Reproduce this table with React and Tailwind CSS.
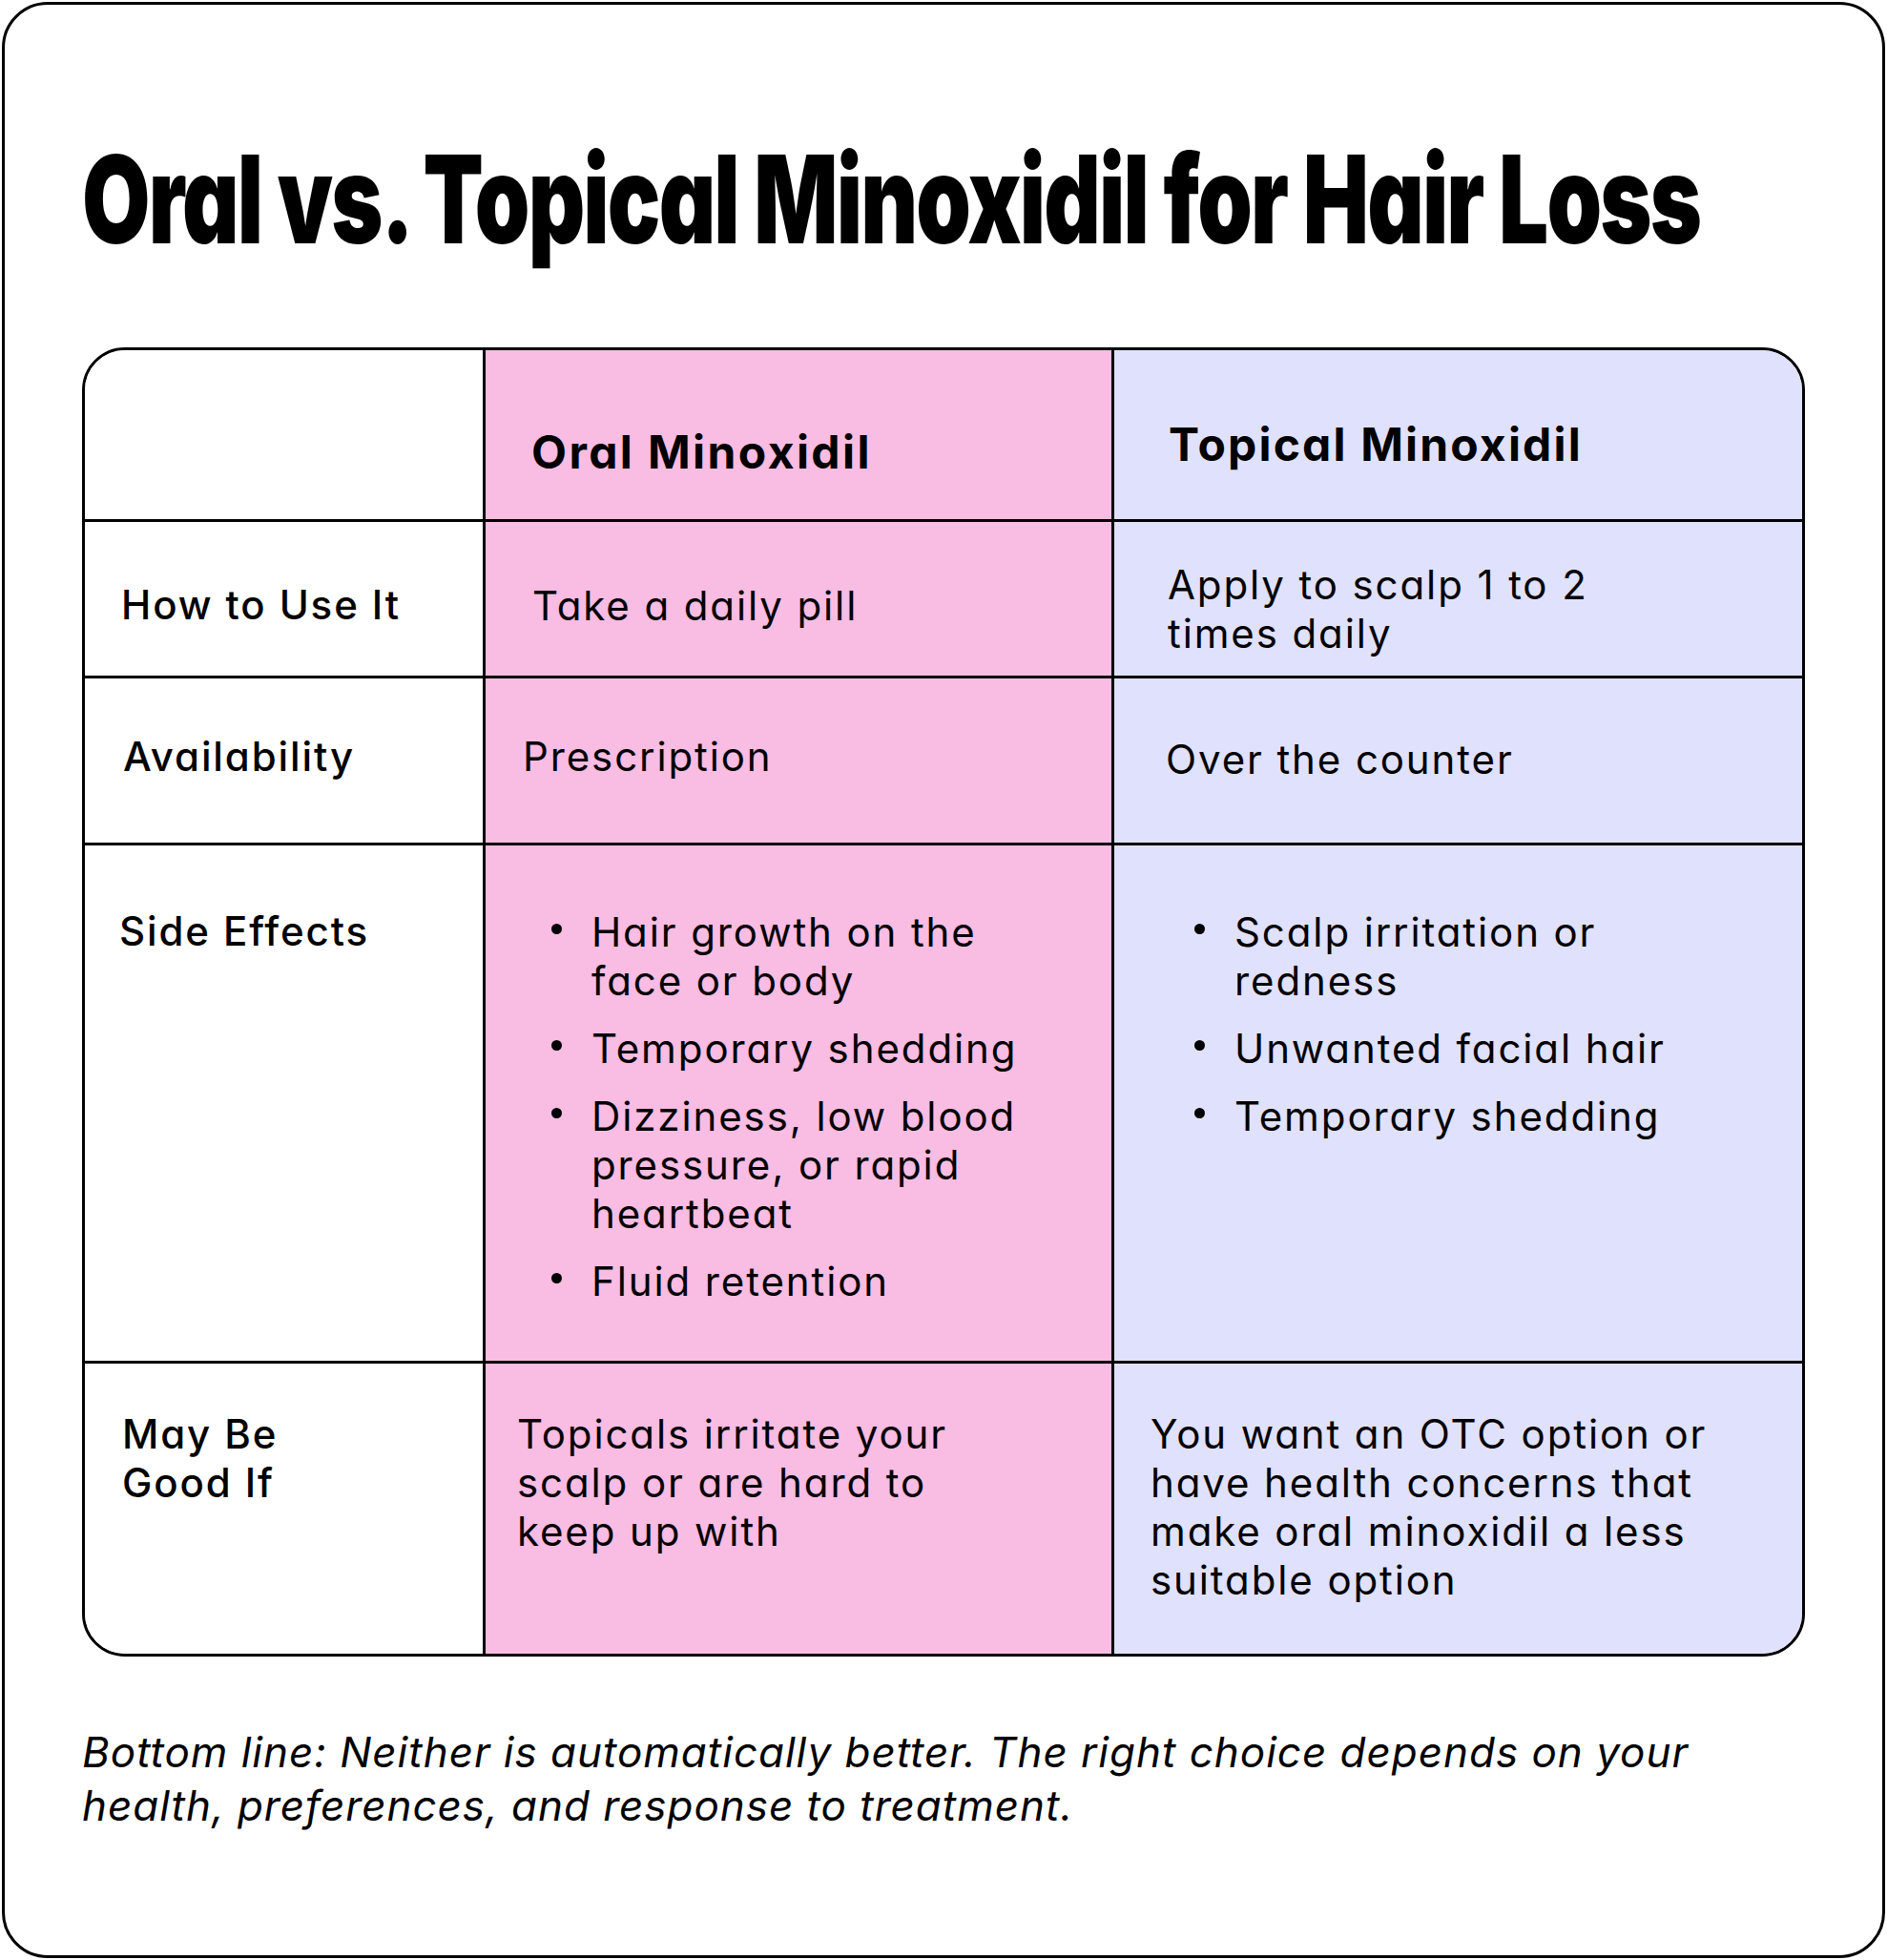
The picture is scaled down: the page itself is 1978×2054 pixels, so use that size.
import React from "react";

const F = "font-['Inter','Liberation_Sans',sans-serif] [font-feature-settings:'cv11']";

function Dot({ className }) {
  return <span className={"block w-[11px] h-[11px] rounded-full bg-black shrink-0 mt-[17px] " + className} />;
}

function Bullets({ items, padL, gap }) {
  return (
    <div className={"flex flex-col gap-[20px] " + padL}>
      {items.map((lines, i) => (
        <div key={i} className="flex items-start">
          <Dot className={gap} />
          <div className="whitespace-nowrap">
            {lines.map((l, j) => (
              <div key={j}>{l}</div>
            ))}
          </div>
        </div>
      ))}
    </div>
  );
}

function Lines({ lines }) {
  return (
    <div className="whitespace-nowrap">
      {lines.map((l, j) => (
        <div key={j}>{l}</div>
      ))}
    </div>
  );
}

export default function App() {
  return (
    <div className={"bg-white p-[2px] text-black " + F}>
      <div className="w-[1974px] h-[2050px] border-[3px] border-black rounded-[48px] bg-white pl-[81px] pt-[140px]">
        <div className="origin-left scale-x-[0.721] text-[128px] leading-none font-black tracking-[-0.02em] whitespace-nowrap">
          Oral vs. Topical Minoxidil for Hair Loss
        </div>

        <div className="mt-[91px] w-[1806px] h-[1372px] border-[3px] border-black rounded-[45px] overflow-hidden flex flex-col text-[42px] leading-[51px] tracking-[0.045em]">
          {/* header */}
          <div className="flex h-[180px] border-b-[3px] border-black shrink-0">
            <div className="w-[420px] border-r-[3px] border-black bg-white" />
            <div className="w-[659px] border-r-[3px] border-black bg-[#f9bce2] pl-[48px] pt-[78px] text-[48px] leading-[58px] font-bold tracking-[0.05em]">
              Oral Minoxidil
            </div>
            <div className="flex-1 bg-[#e0e1fc] pl-[57px] pt-[70px] text-[48px] leading-[58px] font-bold tracking-[0.045em]">
              Topical Minoxidil
            </div>
          </div>

          {/* how to use */}
          <div className="flex h-[164px] border-b-[3px] border-black shrink-0">
            <div className="w-[420px] border-r-[3px] border-black bg-white pl-[38px] pt-[61px] font-medium">
              How to Use It
            </div>
            <div className="w-[659px] border-r-[3px] border-black bg-[#f9bce2] pl-[49px] pt-[62px]">
              Take a daily pill
            </div>
            <div className="flex-1 bg-[#e0e1fc] pl-[56px] pt-[40px]">
              <Lines lines={["Apply to scalp 1 to 2", "times daily"]} />
            </div>
          </div>

          {/* availability */}
          <div className="flex h-[175px] border-b-[3px] border-black shrink-0">
            <div className="w-[420px] border-r-[3px] border-black bg-white pl-[40px] pt-[56px] font-medium">
              Availability
            </div>
            <div className="w-[659px] border-r-[3px] border-black bg-[#f9bce2] pl-[39px] pt-[56px]">
              Prescription
            </div>
            <div className="flex-1 bg-[#e0e1fc] pl-[54px] pt-[59px]">Over the counter</div>
          </div>

          {/* side effects */}
          <div className="flex h-[543px] border-b-[3px] border-black shrink-0">
            <div className="w-[420px] border-r-[3px] border-black bg-white pl-[36px] pt-[64px] font-medium">
              Side Effects
            </div>
            <div className="w-[659px] border-r-[3px] border-black bg-[#f9bce2] pt-[65px]">
              <Bullets
                padL="pl-[69px]"
                gap="mr-[31px]"
                items={[
                  ["Hair growth on the", "face or body"],
                  ["Temporary shedding"],
                  ["Dizziness, low blood", "pressure, or rapid", "heartbeat"],
                  ["Fluid retention"],
                ]}
              />
            </div>
            <div className="flex-1 bg-[#e0e1fc] pt-[65px]">
              <Bullets
                padL="pl-[84px]"
                gap="mr-[31px]"
                items={[["Scalp irritation or", "redness"], ["Unwanted facial hair"], ["Temporary shedding"]]}
              />
            </div>
          </div>

          {/* may be good if */}
          <div className="flex flex-1">
            <div className="w-[420px] border-r-[3px] border-black bg-white pl-[39px] pt-[48px] font-medium">
              <Lines lines={["May Be", "Good If"]} />
            </div>
            <div className="w-[659px] border-r-[3px] border-black bg-[#f9bce2] pl-[33px] pt-[48px]">
              <Lines lines={["Topicals irritate your", "scalp or are hard to", "keep up with"]} />
            </div>
            <div className="flex-1 bg-[#e0e1fc] pl-[38px] pt-[48px]">
              <Lines
                lines={[
                  "You want an OTC option or",
                  "have health concerns that",
                  "make oral minoxidil a less",
                  "suitable option",
                ]}
              />
            </div>
          </div>
        </div>

        <div className="mt-[72px] italic text-[44px] leading-[56px] tracking-[0.022em] whitespace-nowrap">
          <div>Bottom line: Neither is automatically better. The right choice depends on your</div>
          <div>health, preferences, and response to treatment.</div>
        </div>
      </div>
    </div>
  );
}
